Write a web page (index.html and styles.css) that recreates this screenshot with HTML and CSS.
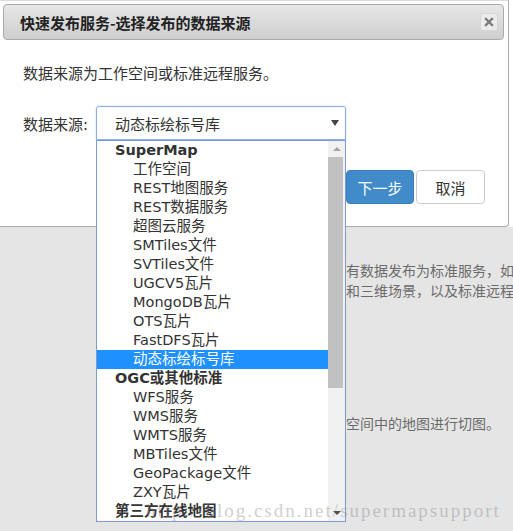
FILE: index.html
```html
<!DOCTYPE html>
<html lang="zh-CN">
<head>
<meta charset="utf-8">
<title>快速发布服务</title>
<link rel="stylesheet" href="styles.css">
</head>
<body>
<div class="dialog">
  <div class="dialog-title">
    <span class="title-text">快速发布服务-选择发布的数据来源</span>
    <button class="close-btn" aria-label="关闭">
      <svg viewBox="0 0 10 10" width="10" height="10"><path d="M2 2 L8 8 M8 2 L2 8" stroke="#7c7c7c" stroke-width="2.4" stroke-linecap="square"/></svg>
    </button>
  </div>
  <div class="dialog-body">
    <p class="intro">数据来源为工作空间或标准远程服务。</p>
    <div class="field">
      <label class="field-label">数据来源:</label>
      <div class="select">
        <div class="select-box">
          <span class="select-value">动态标绘标号库</span>
          <span class="select-arrow"></span>
        </div>
        <div class="dropdown">
          <ul class="options">
            <li class="group">SuperMap</li>
            <li class="opt">工作空间</li>
            <li class="opt">REST地图服务</li>
            <li class="opt">REST数据服务</li>
            <li class="opt">超图云服务</li>
            <li class="opt">SMTiles文件</li>
            <li class="opt">SVTiles文件</li>
            <li class="opt">UGCV5瓦片</li>
            <li class="opt">MongoDB瓦片</li>
            <li class="opt">OTS瓦片</li>
            <li class="opt">FastDFS瓦片</li>
            <li class="opt selected">动态标绘标号库</li>
            <li class="group">OGC或其他标准</li>
            <li class="opt">WFS服务</li>
            <li class="opt">WMS服务</li>
            <li class="opt">WMTS服务</li>
            <li class="opt">MBTiles文件</li>
            <li class="opt">GeoPackage文件</li>
            <li class="opt">ZXY瓦片</li>
            <li class="group">第三方在线地图</li>
          </ul>
          <div class="scrollbar">
            <div class="sb-btn sb-up"></div>
            <div class="sb-thumb"></div>
            <div class="sb-track"></div>
            <div class="sb-btn sb-down"></div>
          </div>
        </div>
      </div>
    </div>
    <div class="actions">
      <button class="btn btn-primary">下一步</button>
      <button class="btn btn-default">取消</button>
    </div>
  </div>
</div>
<div class="page-text">
  <p>有数据发布为标准服务，如</p>
  <p>和三维场景，以及标准远程</p>
  <p class="later">空间中的地图进行切图。</p>
</div>
<div class="watermark">http://blog.csdn.net/supermapsupport</div>
</body>
</html>
```
FILE: styles.css
```css
html, body {
  margin: 0;
  padding: 0;
}

body {
  position: relative;
  width: 513px;
  height: 531px;
  overflow: hidden;
  background: linear-gradient(#fff 0, #fff 227px, #e5e5e5 227px);
  font-family: "DejaVu Sans", "Noto Sans CJK SC", sans-serif;
  color: #333;
}

/* dialog frame */
.dialog {
  width: 508px;
  height: 225px;
  background: #fff;
  border-top: 1px solid #dcdcdc;
  border-right: 1px solid #a9a9a9;
  border-bottom: 1px solid #a9a9a9;
  border-bottom-right-radius: 4px;
}

.dialog-title {
  margin: 3px 4px 0 3px;
  height: 34px;
  border: 1px solid #aaa;
  border-radius: 4px;
  background: linear-gradient(#e7e7e7, #cecece);
  display: flex;
  align-items: center;
  justify-content: space-between;
  padding: 0 5px 0 16px;
}

.title-text {
  font-family: "Noto Sans CJK SC", sans-serif;
  font-weight: bold;
  font-size: 15px;
  color: #222;
}

.close-btn {
  width: 18px;
  height: 18px;
  padding: 0;
  border: 1px solid #d6d6d6;
  border-radius: 3px;
  background: #ebebeb;
  display: flex;
  align-items: center;
  justify-content: center;
}

.dialog-body {
  padding: 0 23px 0 23px;
}

.intro {
  margin: 23px 0 0;
  font-size: 15px;
  line-height: 20px;
  font-family: "Noto Sans CJK SC", sans-serif;
}

.field {
  display: flex;
  align-items: center;
  margin-top: 23px;
}

.field-label {
  width: 73px;
  font-size: 15px;
}

/* select control */
.select {
  position: relative;
  width: 250px;
}

.select-box {
  height: 32px;
  border: 1px solid #8cafea;
  border-radius: 3px 3px 0 0;
  box-shadow: 0 0 2px rgba(102, 153, 230, 0.45);
  padding-left: 18px;
  display: flex;
  align-items: center;
  font-size: 15px;
}

.select-arrow {
  margin-left: auto;
  margin-right: 6px;
  width: 0;
  height: 0;
  border-left: 4px solid transparent;
  border-right: 4px solid transparent;
  border-top: 6px solid #444;
}

.dropdown {
  position: absolute;
  left: 0;
  top: 100%;
  z-index: 5;
  width: 248px;
  height: 380px;
  border: 1px solid #7b9bd6;
  background: #fff;
  display: flex;
}

.options {
  list-style: none;
  margin: 0;
  padding: 0;
  flex: 1;
  overflow: hidden;
}

.options li {
  height: 19px;
  line-height: 19px;
  font-size: 14.5px;
  white-space: nowrap;
  color: #333;
}

.options .group {
  padding-left: 18px;
  font-weight: bold;
}

.options .opt {
  padding-left: 36px;
}

.options .selected {
  background: #1e90ff;
  color: #fff;
}

.scrollbar {
  width: 17px;
  background: #f1f1f1;
  display: flex;
  flex-direction: column;
}

.sb-btn {
  height: 16px;
  display: flex;
  align-items: center;
  justify-content: center;
}

.sb-up::before {
  content: "";
  border-left: 4px solid transparent;
  border-right: 4px solid transparent;
  border-bottom: 4px solid #a3a3a3;
}

.sb-down::before {
  content: "";
  border-left: 4px solid transparent;
  border-right: 4px solid transparent;
  border-top: 4px solid #505050;
}

.sb-thumb {
  height: 231px;
  margin-right: 2px;
  background: #c1c1c1;
}

.sb-track {
  flex: 1;
}

/* footer buttons */
.actions {
  display: flex;
  justify-content: flex-end;
  gap: 2px;
  margin-top: 30px;
}

.btn {
  height: 34px;
  padding: 0;
  border-radius: 4px;
  font-family: "Noto Sans CJK SC", sans-serif;
  font-size: 15px;
}

.btn-primary {
  width: 68px;
  background: #428bca;
  border: 1px solid #3a80bd;
  color: #fff;
}

.btn-default {
  width: 69px;
  background: #fff;
  border: 1px solid #ccc;
  color: #333;
}

/* page content beneath the dialog */
.page-text {
  padding-top: 33px;
  margin-left: 346px;
  font-family: "Noto Sans CJK SC", sans-serif;
  font-size: 14px;
  line-height: 20px;
  color: #6b6b6b;
  white-space: nowrap;
}

.page-text p {
  margin: 0;
}

.page-text .later {
  margin-top: 113px;
}

.watermark {
  position: absolute;
  left: 146px;
  top: 501px;
  z-index: 10;
  font-family: "Liberation Serif", serif;
  font-size: 19px;
  line-height: 19px;
  letter-spacing: 2px;
  color: rgba(130, 130, 130, 0.4);
  white-space: nowrap;
}
```
